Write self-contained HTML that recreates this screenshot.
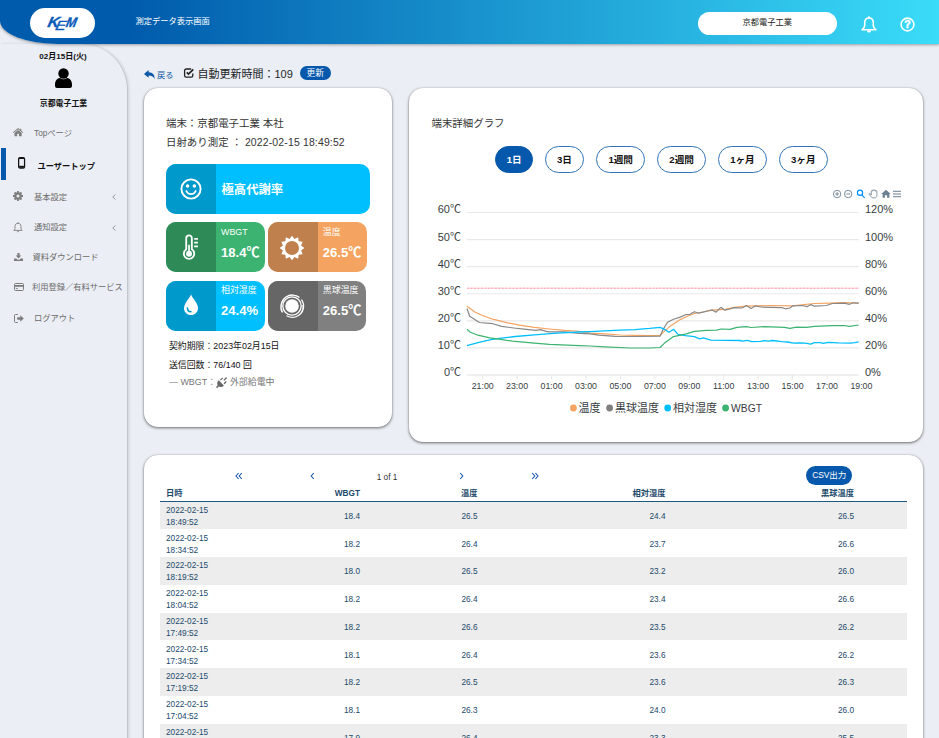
<!DOCTYPE html>
<html lang="ja"><head><meta charset="utf-8"><title>測定データ表示画面</title>
<style>
*{box-sizing:border-box;margin:0;padding:0}
html,body{width:939px;height:738px;overflow:hidden;background:#ebeef4;font-family:"Liberation Sans","Noto Sans CJK JP",sans-serif;color:#212529}
body{position:relative}
.abs{position:absolute}
svg{display:block;overflow:visible}
/* header */
#hd{position:absolute;left:0;top:0;width:939px;height:44px;background:linear-gradient(90deg,#005bac 0%,#005bac 14%,#3adcf9 100%);border-bottom-left-radius:58px 23px;box-shadow:0 1px 3px rgba(0,0,0,.35);z-index:5}
#logo{position:absolute;left:30px;top:8px;width:65px;height:30px;border-radius:15px;background:#fff}
#ttl{position:absolute;left:135.5px;top:15px;height:14px;line-height:14px;font-size:8.25px;color:#fff;white-space:nowrap}
#org{position:absolute;left:698px;top:11.5px;width:138.5px;height:23px;border-radius:11.5px;background:#fff;text-align:center;line-height:22px;font-size:8.25px;color:#222}
/* sidebar */
#sb{position:absolute;left:0;top:44px;width:128px;height:700px;border-right:1px solid #c3c7cc;border-top-right-radius:46px;box-shadow:1px 0 3px rgba(0,0,0,.12);background:#ebeef4;z-index:2}
.sbc{position:absolute;left:0;width:127px;text-align:center;font-weight:bold;font-size:7.9px;line-height:12px;color:#111;white-space:nowrap}
.mi{position:absolute;left:0;width:127px;height:14px;line-height:14px;font-size:8.25px;color:#6b6b6b;white-space:nowrap}
.mi span{position:absolute;top:0}
.mi svg{position:absolute}
/* cards */
.card{position:absolute;background:#fff;border-radius:14px;box-shadow:0 1px 3px rgba(0,0,0,.55), 0 0 1px rgba(0,0,0,.25)}
.t{position:absolute;white-space:nowrap}
.tile{position:absolute;height:50px;border-radius:10px;overflow:hidden}
.tile .dk{position:absolute;left:0;top:0;width:50px;height:50px}
.tile .lb{position:absolute;left:55px;top:3.7px;font-size:8.94px;line-height:12px;color:#fff;white-space:nowrap}
.tile .vl{position:absolute;left:55px;top:20.8px;font-size:13.1px;line-height:20px;color:#fff;font-weight:bold;white-space:nowrap}
.pb{position:absolute;top:146px;height:27px;border-radius:13.5px;border:1px solid #2f74b8;background:#fff;font-size:9.6px;font-weight:bold;line-height:25px;text-align:center;color:#111;white-space:nowrap}
.pb.on{background:#0558ab;border-color:#0558ab;color:#fff}
/* table */
#tb{position:absolute;left:160px;top:501px;width:747px}
.row{position:absolute;left:160px;width:746.5px;height:27.75px;font-size:8.25px;color:#1c4a6b;line-height:12.1px}
.row.od{background:#ededed}
.row div{position:absolute;white-space:nowrap}
.th{position:absolute;font-size:8.25px;font-weight:bold;color:#1c4a6b;line-height:12px;white-space:nowrap;top:488px}
</style></head><body>
<div id="hd"><div id="logo"><svg width="65" height="30" viewBox="0 0 65 30"><g fill="#0a5bb8" stroke="#0a5bb8" stroke-width=".35" font-family="Liberation Sans,sans-serif" font-style="italic"><text transform="translate(16.9,18.9) skewX(-12) scale(1.08,1)" font-size="14.6" font-weight="bold">K</text><text transform="translate(24.8,21.7) skewX(-12) scale(1.2,1)" font-size="13.2">E</text><text transform="translate(35.3,18.9) skewX(-12) scale(0.9,1)" font-size="14" font-weight="bold">M</text></g></svg></div><div id="ttl">測定データ表示画面</div><div id="org">京都電子工業</div><svg class="abs" style="left:861.2px;top:15.600px" width="16" height="17.500" viewBox="0 0 16 17.500"><path d="M8 2C5.200 2 3.700 4.100 3.700 6.800V9.600C3.700 11.200 2.700 12.600 1 13.800H15C13.300 12.600 12.300 11.200 12.300 9.600V6.800C12.300 4.100 10.800 2 8 2Z" fill="none" stroke="#fff" stroke-width="1.600" stroke-linejoin="round"/><circle cx="8" cy="1.300" r="1.100" fill="#fff"/><path d="M5.900 14.600a2.100 2.100 0 0 0 4.200 0z" fill="#fff"/></svg><svg class="abs" style="left:899.8px;top:16.800px" width="15" height="15" viewBox="0 0 15 15"><circle cx="7.500" cy="7.500" r="6.400" fill="none" stroke="#fff" stroke-width="1.600"/><text x="7.500" y="11.300" text-anchor="middle" font-size="10.500" font-weight="bold" fill="#fff" stroke="#fff" stroke-width=".45" font-family="Liberation Sans,sans-serif">?</text></svg></div>
<div id="sb"><div class="sbc" style="top:7.3px;left:-0.6px;font-size:8.05px">02月15日(火)</div><svg class="abs" style="left:54.5px;top:24px" width="17" height="20" viewBox="0 0 17 20"><circle cx="8.500" cy="5.500" r="5.200" fill="#000"/><path d="M0 16.500c0-4 2.500-6.500 5-6.500 1 .8 2.200 1.200 3.500 1.200s2.500-.4 3.500-1.200c2.500 0 5 2.500 5 6.500v1.500c0 1.100-.9 2-2 2h-13c-1.100 0-2-.9-2-2z" fill="#000"/></svg><div class="sbc" style="top:53.6px">京都電子工業</div><div class="mi" style="top:81px;"><svg style="left:13.3px;top:3px" width="10.2" height="8.4" viewBox="0 0 11 9"><path d="M5.500 0L0 4.600l.6.700L5.500 1.200l4.900 4.100.6-.7L9 2.900V.8H7.800v1.100z" fill="#7d7d7d"/><path d="M5.500 2.200L1.600 5.500V9h2.900V6.300h2V9h2.900V5.500z" fill="#7d7d7d"/></svg><span style="left:34px;top:1.5px">Topページ</span></div><div class="abs" style="left:0.8px;top:104px;width:4.8px;height:32px;background:#0558ab"></div><div class="mi" style="top:114px;color:#111;font-weight:bold;"><svg style="left:18.3px;top:-0.6px" width="7.2" height="11.7" viewBox="0 0 8 13"><rect x=".7" y=".7" width="6.600" height="11.600" rx="1.500" fill="none" stroke="#111" stroke-width="1.400"/><rect x="1.400" y="9.800" width="5.200" height="2.200" fill="#111"/><rect x="1" y="1" width="6" height="1.200" fill="#111"/></svg><span style="left:37.5px;top:1.8px">ユーザートップ</span></div><div class="mi" style="top:145px;"><svg style="left:13px;top:2px" width="10" height="10" viewBox="0 0 10 10"><circle cx="5" cy="5" r="2.700" fill="none" stroke="#7d7d7d" stroke-width="2"/><g stroke="#7d7d7d" stroke-width="1.800"><path d="M5 0v10M0 5h10M1.500 1.500l7 7M8.500 1.500l-7 7"/></g><circle cx="5" cy="5" r="1.500" fill="#ebeef4"/></svg><span style="left:34px;top:1.6px">基本設定</span><svg style="left:112px;top:4.5px" width="4" height="6" viewBox="0 0 4 6"><path d="M3.300 .5L.8 3l2.500 2.500" fill="none" stroke="#7d7d7d" stroke-width=".8"/></svg></div><div class="mi" style="top:176px;"><svg style="left:13px;top:1.500px" width="10" height="11" viewBox="0 0 10 11"><path d="M5 1.200c-1.800 0-3 1.400-3 3.200v2c0 .7-.4 1.400-1.200 2h8.400c-.8-.6-1.200-1.300-1.200-2v-2c0-1.800-1.200-3.200-3-3.200z" fill="none" stroke="#7d7d7d" stroke-width=".9" stroke-linejoin="round"/><circle cx="5" cy=".8" r=".6" fill="#7d7d7d"/><path d="M4 9.300a1 1 0 0 0 2 0z" fill="#7d7d7d"/></svg><span style="left:34px;top:0.6px">通知設定</span><svg style="left:112px;top:4.5px" width="4" height="6" viewBox="0 0 4 6"><path d="M3.300 .5L.8 3l2.500 2.500" fill="none" stroke="#7d7d7d" stroke-width=".8"/></svg></div><div class="mi" style="top:206px;"><svg style="left:14px;top:3px" width="9" height="8" viewBox="0 0 9 8"><path d="M3.400 0h2.200v2.600h1.700L4.500 5.400 1.700 2.600h1.700z" fill="#7d7d7d"/><path d="M0 5.500h2.300l1.200 1.200h2l1.200-1.200H9V8H0z" fill="#7d7d7d"/></svg><span style="left:32.5px;top:0.7px">資料ダウンロード</span></div><div class="mi" style="top:236px;"><svg style="left:13.500px;top:3px" width="10" height="8" viewBox="0 0 10 8"><rect x=".5" y=".5" width="9" height="7" rx="1" fill="none" stroke="#7d7d7d" stroke-width="1"/><rect x=".5" y="2" width="9" height="1.800" fill="#7d7d7d"/><rect x="1.800" y="5.200" width="2" height=".9" fill="#7d7d7d"/></svg><span style="left:32px;top:1.2px">利用登録／有料サービス</span></div><div class="mi" style="top:267px;"><svg style="left:13.500px;top:2.500px" width="10" height="9" viewBox="0 0 10 9"><path d="M3.800 .5H1.500c-.6 0-1 .4-1 1v6c0 .6.400 1 1 1h2.300" fill="none" stroke="#7d7d7d" stroke-width="1"/><path d="M3.200 3.200h3V1.300L9.800 4.500 6.200 7.700V5.800h-3z" fill="#7d7d7d"/></svg><span style="left:34px;top:0.5px">ログアウト</span></div></div>
<svg class="abs" style="left:143.8px;top:69.6px" width="11.7" height="10.6" viewBox="0 0 11 10"><path d="M4.300 0L0 3.700l4.300 3.700V5.200c2.700 0 4.500.8 5.600 3.300.5-3.600-1.500-6.200-5.600-6.400z" fill="#0b57a8"/></svg><div class="t" style="left:157px;top:70px;font-size:8.25px;line-height:12px;color:#0b57a8">戻る</div><svg class="abs" style="left:184px;top:68.400px" width="10" height="10" viewBox="0 0 10 10"><path d="M7.200 1H2.200C1.300 1 .6 1.700.6 2.600v5c0 .9.700 1.600 1.600 1.600h5c.9 0 1.600-.7 1.600-1.600V5.500" fill="none" stroke="#222" stroke-width="1.300"/><path d="M2.800 4.300l1.700 1.800L9.300 1.300" fill="none" stroke="#222" stroke-width="1.700"/></svg><div class="t" style="left:197.500px;top:65.7px;font-size:11px;line-height:16px;color:#212529">自動更新時間：109</div><div class="abs" style="left:299.500px;top:66px;width:31.500px;height:14px;border-radius:7px;background:#0558ab;color:#fff;font-size:8.7px;line-height:15.2px;text-align:center">更新</div><div class="card" style="left:144px;top:88px;width:248px;height:339px"></div><div class="t" style="left:166px;top:116px;font-size:10.44px;line-height:15px;color:#333">端末：京都電子工業 本社</div><div class="t" style="left:166px;top:134.500px;font-size:10.44px;line-height:15px;color:#333">日射あり測定 ： <span style="letter-spacing:.16px">2022-02-15 18:49:52</span></div><div class="tile" style="left:166px;top:164px;width:203.8px;background:#00bfff"><div class="dk" style="background:#0099cc"><svg class="abs" style="left:13.5px;top:14.4px" width="22" height="22" viewBox="0 0 22 22"><circle cx="11" cy="11" r="9.600" fill="none" stroke="#fff" stroke-width="1.900"/><circle cx="7.600" cy="8" r="1.800" fill="#fff"/><circle cx="14.400" cy="8" r="1.800" fill="#fff"/><path d="M6.300 13c.9 2.100 2.600 3.100 4.700 3.100s3.800-1 4.700-3.100" fill="none" stroke="#fff" stroke-width="1.900" stroke-linecap="round"/></svg></div><div class="t" style="left:55.500px;top:16.6px;font-size:12.35px;line-height:18px;font-weight:bold;color:#fff">極高代謝率</div></div><div class="tile" style="left:166px;top:222.4px;width:99.2px;background:#3cb371"><div class="dk" style="background:#2e8b57"><svg class="abs" style="left:16.3px;top:12px" width="18.4" height="27" viewBox="0 0 17 25"><path d="M6.500 1.200c-1.500 0-2.600 1.100-2.600 2.600v10.400c-1.300.9-2.200 2.400-2.200 4.100 0 2.700 2.200 4.800 4.800 4.800s4.800-2.100 4.800-4.800c0-1.700-.9-3.200-2.200-4.100V3.800c0-1.500-1.100-2.600-2.600-2.600z" fill="none" stroke="#fff" stroke-width="1.700"/><circle cx="6.500" cy="18.300" r="2.700" fill="#fff"/><rect x="5.700" y="10" width="1.600" height="7" fill="#fff"/><g stroke="#fff" stroke-width="1.500"><path d="M11.300 4.500h3.400M11.300 8h3.400M11.300 11.500h3.400"/></g></svg></div><div class="lb">WBGT</div><div class="vl">18.4℃</div></div><div class="tile" style="left:267.8px;top:222.4px;width:99.2px;background:#f4a460"><div class="dk" style="background:#c0804d"><svg class="abs" style="left:11.7px;top:12.300px" width="26" height="26" viewBox="0 0 26 26"><polygon points="13.00,0.70 15.43,3.92 19.15,2.35 19.65,6.35 23.65,6.85 22.08,10.57 25.30,13.00 22.08,15.43 23.65,19.15 19.65,19.65 19.15,23.65 15.43,22.08 13.00,25.30 10.57,22.08 6.85,23.65 6.35,19.65 2.35,19.15 3.92,15.43 0.70,13.00 3.92,10.57 2.35,6.85 6.35,6.35 6.85,2.35 10.57,3.92" fill="#fff"/><circle cx="13" cy="13" r="7" fill="#c0804d"/></svg></div><div class="lb">温度</div><div class="vl">26.5℃</div></div><div class="tile" style="left:166px;top:280.5px;width:98.8px;background:#00bfff"><div class="dk" style="background:#0099cc"><svg class="abs" style="left:17px;top:13px" width="16" height="22" viewBox="0 0 16 22"><path d="M8 .5C6 5 1 9.500 1 14.200 1 18 4.100 21 8 21s7-3 7-6.800C15 9.500 10 5 8 .5z" fill="#fff"/><path d="M4.500 13.500c0 2.200 1.500 3.700 3.500 3.700" fill="none" stroke="#0099cc" stroke-width="1.600" stroke-linecap="round" transform="translate(0,.5)"/></svg></div><div class="lb">相対湿度</div><div class="vl">24.4%</div></div><div class="tile" style="left:267.8px;top:280.5px;width:98.4px;background:#808080"><div class="dk" style="background:#666"><svg class="abs" style="left:11.6px;top:12.400px" width="26" height="26" viewBox="0 0 26 26"><circle cx="13" cy="13" r="6.800" fill="#fff"/><g fill="none" stroke="#fff"><circle cx="13" cy="13" r="9.200" stroke-width="1.300"/><path d="M3.500 19.500c-3-5-1.500-12 3.500-15.500 4-2.800 10-2.500 13.500.5" stroke-width="1.400"/><path d="M22.500 6.500c3.500 5 2.500 12.500-3 16-3.500 2.300-8 2.500-12 .3" stroke-width="1.300"/><path d="M23.800 12c.8 4.500-1.200 8.500-4.800 10.800" stroke-width="1"/></g></svg></div><div class="lb">黒球温度</div><div class="vl">26.5℃</div></div><div class="t" style="left:169px;top:339.7px;font-size:8.9px;line-height:12px;color:#111">契約期限：2023年02月15日</div><div class="t" style="left:169px;top:358.7px;font-size:8.9px;line-height:12px;color:#111">送信回数：76/140 回</div><div class="t" style="left:169px;top:376.200px;font-size:8.94px;line-height:12px;color:#777">― WBGT：<svg style="display:inline-block;vertical-align:-2.6px;margin:0 2.6px 0 0" width="11.2" height="11.2" viewBox="0 0 10 10"><path d="M9.500 .5L7 3M6 .8l-2 2M9.200 4L7.200 6" stroke="#666" stroke-width="1.200" fill="none"/><path d="M2.500 3l4.500 4.500c-1.200 1.500-3 1.800-4.500 1L1 10 0 9l1.500-1.500c-.8-1.500-.5-3.300 1-4.500z" fill="#666"/></svg>外部給電中</div><div class="card" style="left:409px;top:88px;width:513.7px;height:354px"></div><div class="t" style="left:431.500px;top:116px;font-size:10.44px;line-height:15px;color:#333">端末詳細グラフ</div><div class="pb on" style="left:495px;width:38.3px">1日</div><div class="pb" style="left:545px;width:39px">3日</div><div class="pb" style="left:596.3px;width:48.7px">1週間</div><div class="pb" style="left:657.2px;width:48.8px">2週間</div><div class="pb" style="left:717.8px;width:49.2px">1ヶ月</div><div class="pb" style="left:778.8px;width:49px">3ヶ月</div><svg class="abs" style="left:0;top:0" width="939" height="738" viewBox="0 0 939 738" font-family='"Liberation Sans","Noto Sans CJK JP",sans-serif'><line x1="467" x2="859" y1="212.50" y2="212.50" stroke="#e9e9e9" stroke-width="1.2"/><line x1="467" x2="859" y1="239.58" y2="239.58" stroke="#e9e9e9" stroke-width="1.2"/><line x1="467" x2="859" y1="266.66" y2="266.66" stroke="#e9e9e9" stroke-width="1.2"/><line x1="467" x2="859" y1="293.74" y2="293.74" stroke="#e9e9e9" stroke-width="1.2"/><line x1="467" x2="859" y1="320.82" y2="320.82" stroke="#e9e9e9" stroke-width="1.2"/><line x1="467" x2="859" y1="347.90" y2="347.90" stroke="#e9e9e9" stroke-width="1.2"/><line x1="467" x2="859" y1="374.98" y2="374.98" stroke="#e2e2e2" stroke-width="1.2"/><line x1="482.7" x2="482.7" y1="375.200" y2="379.300" stroke="#e0e0e0" stroke-width="0.800"/><line x1="517.1" x2="517.1" y1="375.200" y2="379.300" stroke="#e0e0e0" stroke-width="0.800"/><line x1="551.6" x2="551.6" y1="375.200" y2="379.300" stroke="#e0e0e0" stroke-width="0.800"/><line x1="586.0" x2="586.0" y1="375.200" y2="379.300" stroke="#e0e0e0" stroke-width="0.800"/><line x1="620.4" x2="620.4" y1="375.200" y2="379.300" stroke="#e0e0e0" stroke-width="0.800"/><line x1="654.9" x2="654.9" y1="375.200" y2="379.300" stroke="#e0e0e0" stroke-width="0.800"/><line x1="689.3" x2="689.3" y1="375.200" y2="379.300" stroke="#e0e0e0" stroke-width="0.800"/><line x1="723.7" x2="723.7" y1="375.200" y2="379.300" stroke="#e0e0e0" stroke-width="0.800"/><line x1="758.1" x2="758.1" y1="375.200" y2="379.300" stroke="#e0e0e0" stroke-width="0.800"/><line x1="792.6" x2="792.6" y1="375.200" y2="379.300" stroke="#e0e0e0" stroke-width="0.800"/><line x1="827.0" x2="827.0" y1="375.200" y2="379.300" stroke="#e0e0e0" stroke-width="0.800"/><line x1="467" x2="859" y1="288.200" y2="288.200" stroke="#ff5c6c" stroke-width="1" stroke-dasharray="0.700 0.700"/><polyline points="467.0,306.2 474.9,312.0 482.4,315.5 492.8,319.2 504.7,322.2 519.6,325.2 534.5,327.3 549.5,329.0 564.4,330.4 579.3,331.4 590.0,333.1 604.9,333.8 619.8,335.0 634.7,335.4 649.6,335.7 660.1,335.3 664.5,331.1 670.5,325.9 679.5,319.9 686.9,316.5 694.4,313.5 703.3,312.0 712.3,310.2 725.0,309.3 734.0,307.3 745.9,306.2 769.7,305.5 792.1,305.8 814.5,303.5 829.4,303.1 844.3,302.5 858.7,303.1" fill="none" stroke="#f4a460" stroke-width="1.2" stroke-linejoin="round" stroke-linecap="butt"/><polyline points="467.0,308.5 469.7,316.2 479.4,322.5 492.8,323.7 501.7,326.4 513.7,328.0 524.1,329.2 536.0,330.4 540.5,329.6 548.0,331.9 564.4,331.9 579.3,333.4 590.0,333.8 598.9,335.1 615.3,336.3 634.7,336.5 660.1,336.2 663.0,329.6 667.5,322.2 673.5,319.2 679.5,317.4 685.4,314.7 689.9,314.3 694.4,311.7 698.8,313.2 709.3,310.5 712.3,309.9 716.0,312.2 720.9,307.3 724.9,310.2 730.0,309.0 734.0,307.6 742.1,308.0 746.3,305.5 751.1,308.5 755.6,305.8 760.8,307.0 769.7,307.3 781.7,307.6 785.4,308.8 789.9,308.0 792.8,305.8 802.5,305.5 807.0,306.7 810.7,304.6 814.5,306.2 826.4,305.5 832.3,303.5 844.3,303.1 849.5,304.3 853.2,302.8 858.7,303.1" fill="none" stroke="#888" stroke-width="1.2" stroke-linejoin="round" stroke-linecap="butt"/><polyline points="467.0,345.6 477.9,342.6 489.8,339.8 497.3,338.7 515.2,336.5 534.5,334.9 556.9,333.1 579.3,332.0 590.0,331.6 619.8,330.1 634.7,329.6 649.6,328.4 660.1,327.3 664.5,329.3 669.0,332.3 673.5,329.3 678.0,334.4 685.4,335.6 694.4,336.6 699.6,338.9 703.3,337.8 710.8,340.1 725.0,340.4 739.9,340.5 742.9,341.1 747.4,340.4 751.8,341.6 760.8,341.4 763.8,340.7 768.2,341.1 772.7,340.5 781.7,341.6 787.6,342.0 793.6,343.2 799.6,342.8 805.5,343.2 810.7,344.1 814.5,342.6 820.4,342.6 823.4,343.4 827.9,342.3 838.3,342.9 850.2,343.2 854.7,342.6 858.7,341.9" fill="none" stroke="#00bfff" stroke-width="1.3" stroke-linejoin="round" stroke-linecap="butt"/><polyline points="467.0,329.3 470.4,332.3 477.9,335.2 489.8,337.8 497.3,338.9 512.2,341.1 534.5,343.1 549.5,344.3 579.3,345.7 590.0,346.0 604.9,346.9 630.3,348.0 649.6,348.0 660.1,347.5 664.5,343.1 673.5,336.6 685.4,334.1 694.4,331.4 706.3,330.4 716.7,330.2 721.2,329.0 730.0,329.4 736.9,327.4 746.6,326.7 751.1,327.5 763.8,326.7 784.6,327.4 789.9,328.3 796.6,327.1 807.0,327.4 814.5,326.3 832.3,325.6 844.3,325.5 849.5,326.3 858.7,325.0" fill="none" stroke="#3cb371" stroke-width="1.2" stroke-linejoin="round" stroke-linecap="butt"/><text x="461" y="213.4" text-anchor="end" font-size="11" fill="#373d3f">60℃</text><text x="865" y="213.4" font-size="11" fill="#373d3f">120%</text><text x="461" y="240.5" text-anchor="end" font-size="11" fill="#373d3f">50℃</text><text x="865" y="240.5" font-size="11" fill="#373d3f">100%</text><text x="461" y="267.6" text-anchor="end" font-size="11" fill="#373d3f">40℃</text><text x="865" y="267.6" font-size="11" fill="#373d3f">80%</text><text x="461" y="294.6" text-anchor="end" font-size="11" fill="#373d3f">30℃</text><text x="865" y="294.6" font-size="11" fill="#373d3f">60%</text><text x="461" y="321.7" text-anchor="end" font-size="11" fill="#373d3f">20℃</text><text x="865" y="321.7" font-size="11" fill="#373d3f">40%</text><text x="461" y="348.8" text-anchor="end" font-size="11" fill="#373d3f">10℃</text><text x="865" y="348.8" font-size="11" fill="#373d3f">20%</text><text x="461" y="375.9" text-anchor="end" font-size="11" fill="#373d3f">0℃</text><text x="865" y="375.9" font-size="11" fill="#373d3f">0%</text><text x="482.7" y="388.700" text-anchor="middle" font-size="8.8" fill="#373d3f">21:00</text><text x="517.1" y="388.700" text-anchor="middle" font-size="8.8" fill="#373d3f">23:00</text><text x="551.6" y="388.700" text-anchor="middle" font-size="8.8" fill="#373d3f">01:00</text><text x="586.0" y="388.700" text-anchor="middle" font-size="8.8" fill="#373d3f">03:00</text><text x="620.4" y="388.700" text-anchor="middle" font-size="8.8" fill="#373d3f">05:00</text><text x="654.9" y="388.700" text-anchor="middle" font-size="8.8" fill="#373d3f">07:00</text><text x="689.3" y="388.700" text-anchor="middle" font-size="8.8" fill="#373d3f">09:00</text><text x="723.7" y="388.700" text-anchor="middle" font-size="8.8" fill="#373d3f">11:00</text><text x="758.1" y="388.700" text-anchor="middle" font-size="8.8" fill="#373d3f">13:00</text><text x="792.6" y="388.700" text-anchor="middle" font-size="8.8" fill="#373d3f">15:00</text><text x="827.0" y="388.700" text-anchor="middle" font-size="8.8" fill="#373d3f">17:00</text><text x="861.4" y="388.700" text-anchor="middle" font-size="8.8" fill="#373d3f">19:00</text><circle cx="573.4" cy="408" r="3.400" fill="#f4a460"/><text x="578.6" y="411.900" font-size="11" fill="#373d3f">温度</text><circle cx="609.6" cy="408" r="3.400" fill="#808080"/><text x="614.9" y="411.900" font-size="11" fill="#373d3f">黒球温度</text><circle cx="667.7" cy="408" r="3.400" fill="#00bfff"/><text x="673.1" y="411.900" font-size="11" fill="#373d3f">相対湿度</text><circle cx="725.6" cy="408" r="3.400" fill="#3cb371"/><text x="731.1" y="411.900" font-size="10.3" fill="#373d3f">WBGT</text><g fill="none" stroke="#6e8192" stroke-width="0.900"><circle cx="837.1" cy="194" r="3.700"/><path d="M835.200 194h3.800M837.1 192.100v3.800"/><circle cx="848.200" cy="194" r="3.700"/><path d="M846.300 194h3.800"/></g><g fill="none" stroke="#008ffb" stroke-width="1.200"><circle cx="860" cy="192.800" r="2.600"/><path d="M861.800 194.800l2.900 3"/></g><path d="M871.300 195V191.200a.7.7 0 0 1 1.400 0V190.400a.7.7 0 0 1 1.400 0v.3a.7.7 0 0 1 1.400 0v.6a.7.7 0 0 1 1.400 0V195.300c0 1.700-1 2.700-2.900 2.700s-2.700-.8-3.400-1.800l-1.500-2c-.4-.6.4-1.200 1-.7z" fill="none" stroke="#6e8192" stroke-width="0.800" stroke-linejoin="round"/><path d="M886 189.800l-4.700 4.300h1.300v3.600h2.300v-2.500h2.200v2.500h2.300v-3.600h1.300z" fill="#6e8192"/><g stroke="#6e8192" stroke-width="1"><path d="M893 191.300h8M893 194h8M893 196.700h8"/></g></svg><div class="card" style="left:144px;top:455px;width:778.7px;height:320px"></div><svg class="abs" style="left:234.500px;top:472px" width="8" height="8" viewBox="0 0 8 8"><path d="M3.600 1L1 4l2.600 3M6.800 1L4.200 4l2.600 3" fill="none" stroke="#1a56b0" stroke-width="1.1"/></svg><svg class="abs" style="left:310px;top:472px" width="5" height="8" viewBox="0 0 5 8"><path d="M3.800 1L1.200 4l2.600 3" fill="none" stroke="#1a56b0" stroke-width="1.1"/></svg><div class="t" style="left:367px;top:472.4px;width:40px;text-align:center;font-size:8.250px;line-height:12px;color:#333">1 of 1</div><svg class="abs" style="left:458.500px;top:472px" width="5" height="8" viewBox="0 0 5 8"><path d="M1.200 1l2.600 3-2.600 3" fill="none" stroke="#1a56b0" stroke-width="1.1"/></svg><svg class="abs" style="left:531px;top:472px" width="8" height="8" viewBox="0 0 8 8"><path d="M1.200 1l2.600 3-2.600 3M4.400 1L7 4 4.400 7" fill="none" stroke="#1a56b0" stroke-width="1.1"/></svg><div class="abs" style="left:806.3px;top:466px;width:45.8px;height:19.1px;border-radius:9.55px;background:#0558ab;color:#fff;font-size:8.5px;letter-spacing:-.15px;line-height:19px;text-align:center;white-space:nowrap">CSV出力</div><div class="th" style="left:166px">日時</div><div class="th" style="right:579px">WBGT</div><div class="th" style="right:461.5px">温度</div><div class="th" style="right:273.5px">相対湿度</div><div class="th" style="right:85px">黒球温度</div><div class="abs" style="left:160px;top:500.500px;width:746.5px;height:1.400px;background:#1c5a80"></div><div class="row od" style="top:501.60px"><div style="left:6px;top:3.3px">2022-02-15<br>18:49:52</div><div style="right:546.5px;top:9.2px">18.4</div><div style="right:429.0px;top:9.2px">26.5</div><div style="right:241.0px;top:9.2px">24.4</div><div style="right:52.5px;top:9.2px">26.5</div></div><div class="row" style="top:529.35px"><div style="left:6px;top:3.3px">2022-02-15<br>18:34:52</div><div style="right:546.5px;top:9.2px">18.2</div><div style="right:429.0px;top:9.2px">26.4</div><div style="right:241.0px;top:9.2px">23.7</div><div style="right:52.5px;top:9.2px">26.6</div></div><div class="row od" style="top:557.10px"><div style="left:6px;top:3.3px">2022-02-15<br>18:19:52</div><div style="right:546.5px;top:9.2px">18.0</div><div style="right:429.0px;top:9.2px">26.5</div><div style="right:241.0px;top:9.2px">23.2</div><div style="right:52.5px;top:9.2px">26.0</div></div><div class="row" style="top:584.85px"><div style="left:6px;top:3.3px">2022-02-15<br>18:04:52</div><div style="right:546.5px;top:9.2px">18.2</div><div style="right:429.0px;top:9.2px">26.4</div><div style="right:241.0px;top:9.2px">23.4</div><div style="right:52.5px;top:9.2px">26.6</div></div><div class="row od" style="top:612.60px"><div style="left:6px;top:3.3px">2022-02-15<br>17:49:52</div><div style="right:546.5px;top:9.2px">18.2</div><div style="right:429.0px;top:9.2px">26.6</div><div style="right:241.0px;top:9.2px">23.5</div><div style="right:52.5px;top:9.2px">26.2</div></div><div class="row" style="top:640.35px"><div style="left:6px;top:3.3px">2022-02-15<br>17:34:52</div><div style="right:546.5px;top:9.2px">18.1</div><div style="right:429.0px;top:9.2px">26.4</div><div style="right:241.0px;top:9.2px">23.6</div><div style="right:52.5px;top:9.2px">26.2</div></div><div class="row od" style="top:668.10px"><div style="left:6px;top:3.3px">2022-02-15<br>17:19:52</div><div style="right:546.5px;top:9.2px">18.2</div><div style="right:429.0px;top:9.2px">26.5</div><div style="right:241.0px;top:9.2px">23.6</div><div style="right:52.5px;top:9.2px">26.3</div></div><div class="row" style="top:695.85px"><div style="left:6px;top:3.3px">2022-02-15<br>17:04:52</div><div style="right:546.5px;top:9.2px">18.1</div><div style="right:429.0px;top:9.2px">26.3</div><div style="right:241.0px;top:9.2px">24.0</div><div style="right:52.5px;top:9.2px">26.0</div></div><div class="row od" style="top:723.60px"><div style="left:6px;top:3.3px">2022-02-15<br>16:49:52</div><div style="right:546.5px;top:9.2px">17.9</div><div style="right:429.0px;top:9.2px">26.4</div><div style="right:241.0px;top:9.2px">23.3</div><div style="right:52.5px;top:9.2px">25.5</div></div>
</body></html>
